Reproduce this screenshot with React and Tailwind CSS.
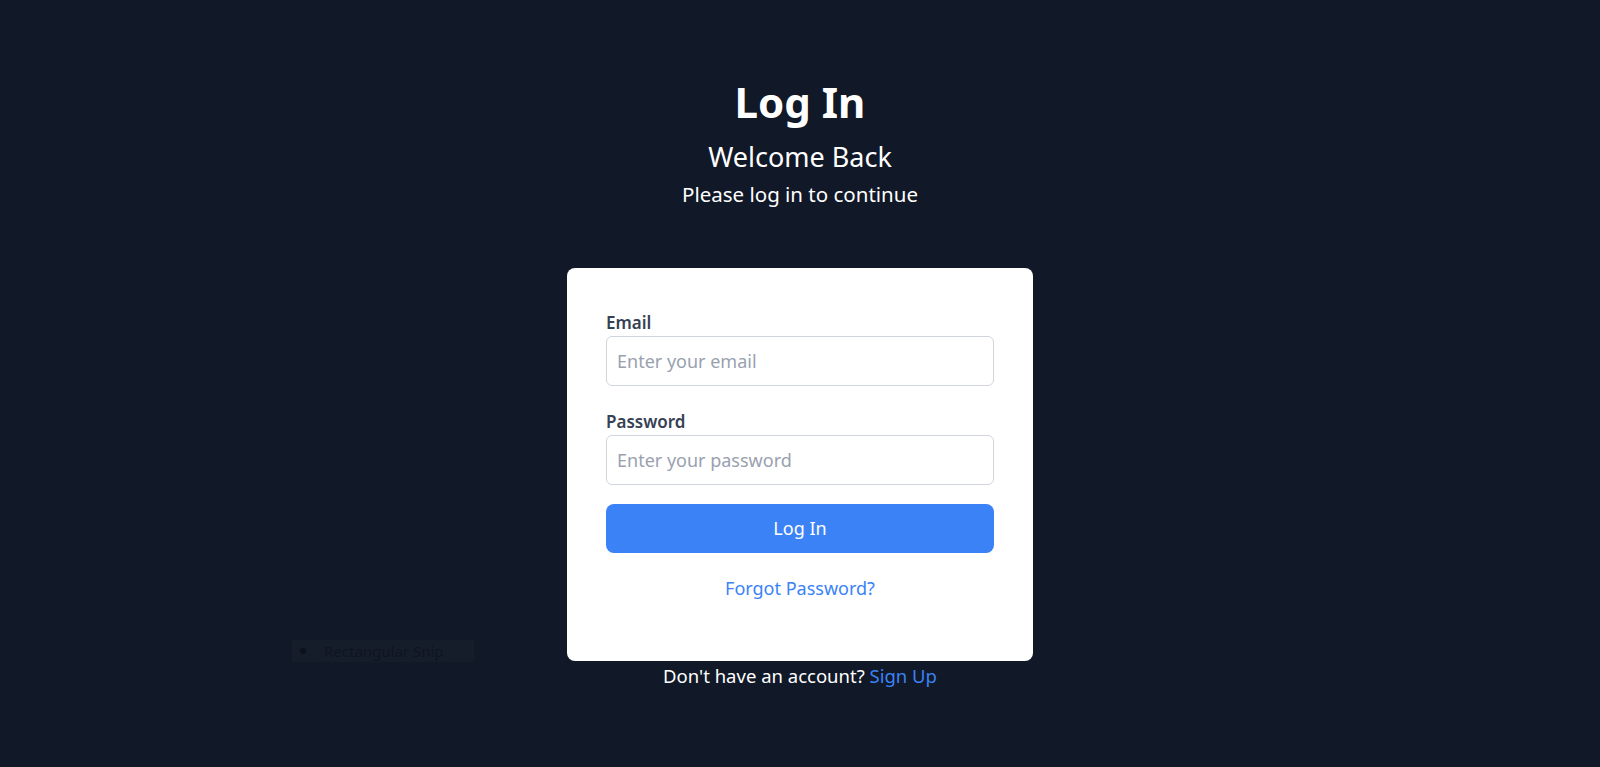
import { useState } from 'react';

/**
 * LoginPage — simple centered login card on a dark background
 */
export default function App() {
  const [email, setEmail] = useState('');
  const [password, setPassword] = useState('');

  return (
    <div
      className="relative min-h-screen bg-[#111827] flex flex-col items-center pt-[76px]"
      style={{ fontFamily: '"Noto Sans", "Open Sans", sans-serif' }}
    >
      <h1 className="text-[42px] leading-[52px] font-bold text-white">Log In</h1>
      <p className="mt-[11px] text-[27px] leading-[36px] text-white">Welcome Back</p>
      <p className="mt-[5px] text-[20.5px] leading-[28px] text-white">Please log in to continue</p>

      <div className="mt-[60px] w-[466px] rounded-lg bg-white px-[39px] pt-[43px] pb-[60px]">
        <form onSubmit={(e) => e.preventDefault()}>
          <label className="block mb-[1px] text-[17px] leading-[24px] font-semibold text-gray-700">Email</label>
          <input
            type="email"
            value={email}
            onChange={(e) => setEmail(e.target.value)}
            placeholder="Enter your email"
            className="block w-full h-[50px] rounded-md border border-gray-300 px-[10px] text-[18px] text-gray-800 placeholder-gray-400 outline-none"
          />

          <label className="block mt-[24px] mb-[1px] text-[17px] leading-[24px] font-semibold text-gray-700">Password</label>
          <input
            type="password"
            value={password}
            onChange={(e) => setPassword(e.target.value)}
            placeholder="Enter your password"
            className="block w-full h-[50px] rounded-md border border-gray-300 px-[10px] text-[18px] text-gray-800 placeholder-gray-400 outline-none"
          />

          <button
            type="submit"
            className="mt-[19px] w-full h-[49px] rounded-lg bg-[#3b82f6] text-white text-[18px]"
          >
            Log In
          </button>
        </form>

        <div className="mt-[22px] text-center">
          <a href="#" className="text-[18px] leading-[26px] text-[#3b82f6]">Forgot Password?</a>
        </div>
      </div>

      <p className="mt-[1px] text-[18.5px] leading-[28px] text-white">
        Don't have an account? <a href="#" className="text-[#3b82f6]">Sign Up</a>
      </p>

      {/* faint snipping-tool leftover */}
      <div className="absolute left-[292px] top-[640px] w-[182px] h-[22px] bg-[#151d2b] flex items-center">
        <span className="ml-[8px] w-[6px] h-[6px] rounded-full bg-[#0c121d]" />
        <span className="ml-[18px] text-[15px] text-[#0e1521]">Rectangular Snip</span>
      </div>
    </div>
  );
}
